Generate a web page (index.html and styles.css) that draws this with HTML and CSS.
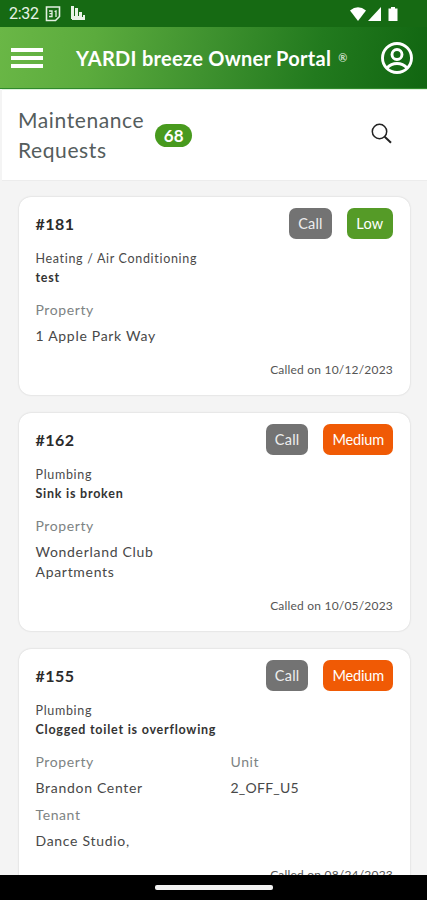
FILE: index.html
```html
<!DOCTYPE html>
<html lang="en">
<head>
<meta charset="utf-8">
<title>Owner Portal</title>
<link rel="stylesheet" href="styles.css">
</head>
<body>
<div class="phone">
  <div class="status">
    <span class="clock">2:32</span>
    <svg class="cal" width="16" height="16" viewBox="0 0 16 16"><path d="M1.500 1h13v9.500l-4 4h-9z" fill="none" stroke="#e4f0e2" stroke-width="1.600"/><path d="M4 5h3v5.500H4M4.500 7.700H7M9.500 5.500l1.500-.5v6" fill="none" stroke="#e4f0e2" stroke-width="1.300"/></svg>
    <svg class="bars" width="14" height="15" viewBox="0 0 14 15"><path d="M0 0h3v10h1V2h3v8h1V6h3v5h1V9h2v5H1V13H0z" fill="#e9f3e7"/></svg>
    <span class="grow"></span>
    <svg width="49" height="16" viewBox="0 0 49 16" fill="#fff"><path d="M0 4.500Q8 -2 16 4.500L8 15z"/><path d="M31 1v14H18z"/><path d="M41 1h4v1.500h2.500V15h-9V2.500H41z"/></svg>
  </div>
  <header class="bar">
    <div class="menu"><i></i><i></i><i></i></div>
    <h1>YARDI breeze Owner Portal</h1><span class="reg">®</span>
    <span class="grow"></span>
    <svg width="34" height="34" viewBox="0 0 34 34" fill="none" stroke="#fff" stroke-width="2.900"><circle cx="17" cy="17" r="14.500"/><circle cx="17" cy="13.500" r="5"/><path d="M7 27Q11 22.500 17 22.500T27 27"/></svg>
  </header>
  <section class="title">
    <h2>Maintenance<br>Requests</h2>
    <span class="count">68</span>
    <span class="grow"></span>
    <svg class="search" width="22" height="22" viewBox="0 0 22 22" fill="none" stroke="#222"><circle cx="8.500" cy="8.500" r="7.200" stroke-width="1.500"/><path d="M13.700 13.700l6.300 6" stroke-width="2"/></svg>
  </section>
  <main class="list">
    <article class="card">
      <div class="head"><b class="num">#181</b><span class="tag">Call</span><span class="tag low">Low</span></div>
      <p class="cat">Heating / Air Conditioning</p>
      <p class="desc">test</p>
      <div class="fields"><div><p class="label">Property</p><p class="value">1 Apple Park Way</p></div></div>
      <p class="date">Called on 10/12/2023</p>
    </article>
    <article class="card">
      <div class="head"><b class="num">#162</b><span class="tag">Call</span><span class="tag med">Medium</span></div>
      <p class="cat">Plumbing</p>
      <p class="desc">Sink is broken</p>
      <div class="fields"><div><p class="label">Property</p><p class="value">Wonderland Club<br>Apartments</p></div></div>
      <p class="date">Called on 10/05/2023</p>
    </article>
    <article class="card">
      <div class="head"><b class="num">#155</b><span class="tag">Call</span><span class="tag med">Medium</span></div>
      <p class="cat">Plumbing</p>
      <p class="desc">Clogged toilet is overflowing</p>
      <div class="fields">
        <div><p class="label">Property</p><p class="value">Brandon Center</p></div>
        <div><p class="label">Unit</p><p class="value unit">2_OFF_U5</p></div>
        <div><p class="label">Tenant</p><p class="value">Dance Studio,</p></div>
      </div>
      <p class="date">Called on 08/24/2023</p>
    </article>
  </main>
  <footer class="nav"><i></i></footer>
</div>
</body>
</html>
```
FILE: styles.css
```css
* { box-sizing: border-box; margin: 0; padding: 0; }
body { font-family: Lato, "Open Sans", sans-serif; background: #f4f4f4; color: #333; }
.phone { width: 427px; height: 900px; display: flex; flex-direction: column; overflow: hidden; }
.phone svg { display: block; flex: none; }
.grow { flex: 1; }
.status { height: 27px; flex: none; display: flex; align-items: center; padding: 0 28px 0 9px; background: #166a13; color: #e9f3e7; }
.clock { font: 16px/27px Roboto, sans-serif; width: 36px; letter-spacing: -.3px; }
.bars { margin-left: 10px; }
.bar { height: 62px; flex: none; display: flex; align-items: center; padding: 0 13px 0 11px; color: #fff; background: linear-gradient(100deg, #6ab746 0%, #5bab3d 22%, #3f922f 48%, #227a1e 74%, #116611 100%); border-bottom: 1px solid #2f8a2b; }
.menu { width: 32px; display: flex; flex-direction: column; gap: 4px; }
.menu i { height: 4px; background: #fff; }
.bar h1 { margin-left: 33px; font-size: 20px; line-height: 28px; font-weight: 700; letter-spacing: .28px; white-space: nowrap; }
.reg { margin-left: 7px; font-size: 11px; font-weight: 700; color: #c5dcc3; }
.title { height: 92px; flex: none; display: flex; align-items: center; margin-left: 2px; padding: 0 34px 0 16px; background: #fff; border-top: 1px solid #dff2dc; border-bottom: 1px solid #ececec; }
.title h2 { font-size: 21px; line-height: 30px; font-weight: 400; letter-spacing: .6px; color: #555d5d; }
.count { width: 37px; margin-left: 11px; height: 23px; border-radius: 12px; background: #489a1e; color: #fff; font-size: 17px; line-height: 23px; font-weight: 700; text-align: center; }
.search { margin-bottom: 2px; }
.list { flex: 1; min-height: 0; overflow: hidden; padding: 16px 17px 0 18.500px; display: flex; flex-direction: column; gap: 18.500px; }
.card { flex: none; padding: 11px 17px 17px; background: #fff; border-radius: 12px; box-shadow: 0 0 2px rgba(0,0,0,.18); white-space: nowrap; }
.head { height: 31px; display: flex; align-items: center; }
.num { margin-right: auto; font-size: 16px; letter-spacing: .5px; color: #2b2b2b; }
.tag { height: 31px; padding: 0 9px; border-radius: 7px; background: #737373; color: #eee; font-size: 14.500px; line-height: 31px; letter-spacing: .2px; }
.tag + .tag { margin-left: 15px; color: #fff; }
.tag.low { background: #559b27; padding: 0 9.500px; letter-spacing: .3px; }
.tag.med { background: #f05a05; letter-spacing: -.15px; }
.cat, .desc { font-size: 12.500px; line-height: 19px; letter-spacing: .68px; }
.cat { margin-top: 10px; color: #4a4a4a; }
.desc { font-weight: 700; letter-spacing: .76px; color: #333; }
.fields { margin-top: 13px; display: grid; grid-template-columns: 195px 1fr; row-gap: 7.500px; }
.label, .value { font-size: 14px; line-height: 20px; letter-spacing: .6px; }
.label { color: #7d8383; }
.value { margin-top: 5.500px; letter-spacing: .7px; color: #484848; }
.value.unit { letter-spacing: .25px; }
.date { margin-top: 16px; font-size: 12px; line-height: 16px; letter-spacing: .2px; text-align: right; color: #555; }
.nav { height: 25px; flex: none; background: #000; display: flex; justify-content: center; align-items: center; }
.nav i { width: 118px; height: 5px; border-radius: 2px; background: #f2f2f2; }
```
